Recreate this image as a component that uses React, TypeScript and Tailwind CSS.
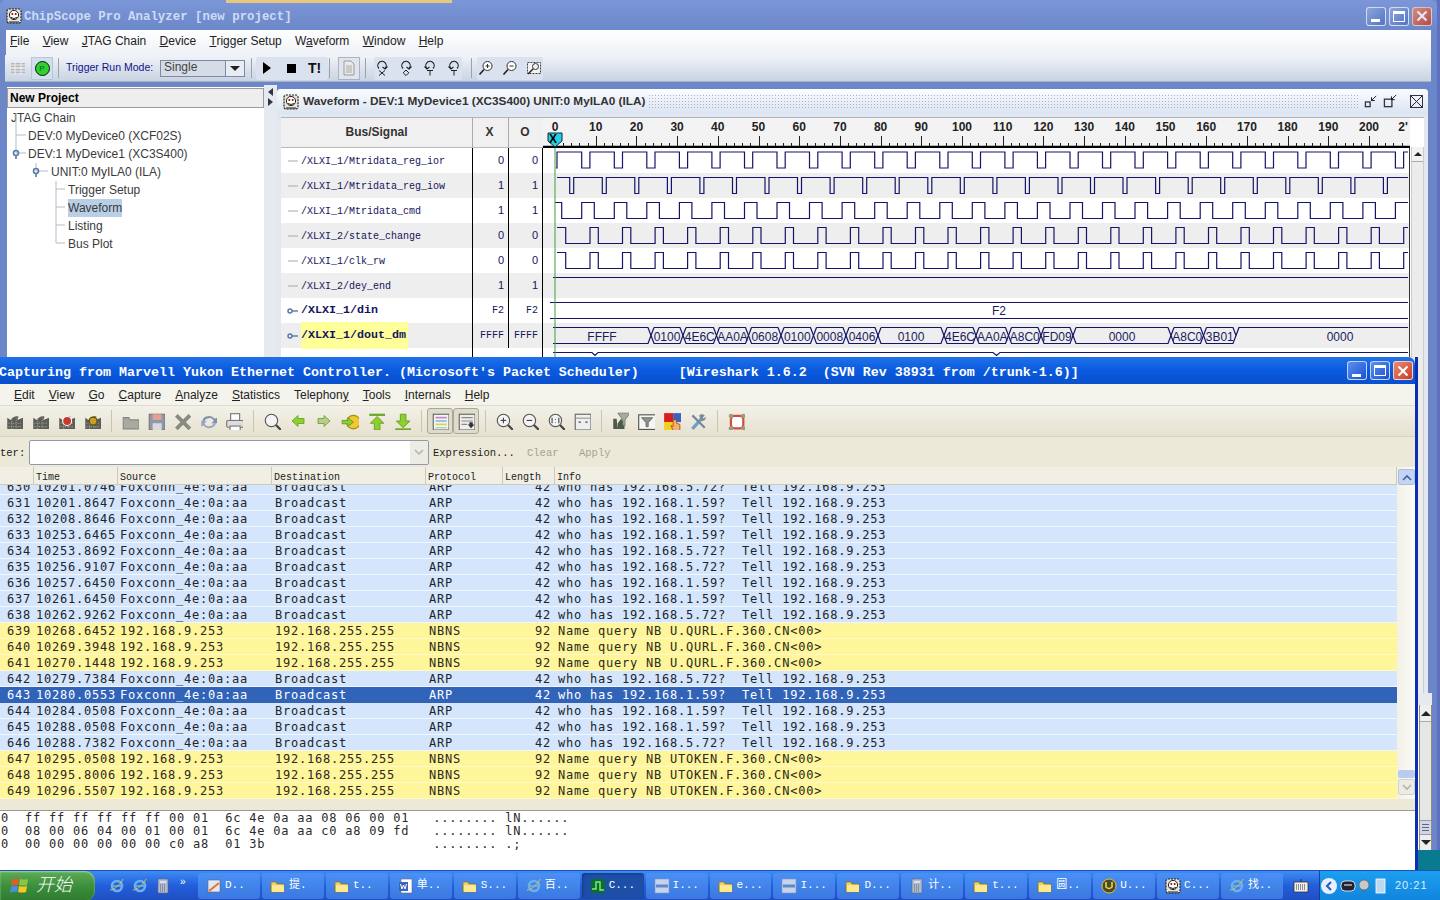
import type { ReactNode } from 'react';

const mono = "font-['Liberation_Mono',monospace]";
const pkt = "font-['DejaVu_Sans_Mono',monospace] text-[12px] tracking-[0.78px]";

const I = ({ s = 16, children }: { s?: number; children: ReactNode }) => (
  <svg width={s} height={s} viewBox="0 0 16 16" fill="none" className="shrink-0">
    {children}
  </svg>
);

const ChipLogo = () => (
  <I>
    <rect x="1" y="1" width="14" height="14" rx="2" fill="#e8e4d8" stroke="#222" strokeWidth="1.2" strokeDasharray="2 1" />
    <circle cx="8" cy="7" r="4.6" fill="#fff" stroke="#222" />
    <circle cx="6.3" cy="6" r="1" fill="#900" />
    <circle cx="9.7" cy="6" r="1" fill="#900" />
    <path d="M5 9.5q3 2 6 0" stroke="#222" />
    <path d="M3 14h10" stroke="#222" />
  </I>
);

// chipscope toolbar trigger icons: loop arrow with a small sign below
const Trig = ({ flip, sign }: { flip?: boolean; sign: string }) => (
  <I>
    <path d="M5 8.5A4.2 4.2 0 1 1 11 8.5" stroke="#222" strokeWidth="1.2" />
    <path d={flip ? 'M2.5 6.5L5 9l2.5-2' : 'M8.5 7l2.5 2 2.5-2.5'} stroke="#222" strokeWidth="1.1" />
    {sign === 'x' && <path d="M5 10.5l6 5M11 10.5l-6 5" stroke="#222" />}
    {sign === 'd' && <path d="M8 10l2.8 2.8L8 15.6l-2.8-2.8z" stroke="#222" />}
    {sign === 't' && <path d="M5 10.5h6M8 10.5V15.5" stroke="#222" />}
  </I>
);

const Lens = ({ sign }: { sign?: string }) => (
  <I>
    <circle cx="9.5" cy="6" r="4.5" stroke="#333" fill="#fff" />
    <path d="M6 9.5L1.5 14.5" stroke="#222" strokeWidth="1.6" />
    {sign && <path d="M7.5 6h4" stroke="#333" />}
    {sign === '+' && <path d="M9.5 4v4" stroke="#333" />}
  </I>
);

const ChipScopeToolbar = () => (
  <div className="h-[27px] flex items-center bg-linear-to-b from-[#f1f4f9] to-[#c9d3e2] border-b border-[#a8b2c4] pl-[5px]">
    <div className="w-[16px]">
      <I>
        <path d="M1 3h14v4H1zM1 9h14v4H1z" fill="#b7b7b7" />
        <path d="M5 1v14M11 1v14M1 5h14M1 11h14" stroke="#eee" />
      </I>
    </div>
    <div className="ml-[5px] w-[22px] h-[23px] flex items-center justify-center bg-[#cfe0ec] border border-[#b8c6d6]">
      <div className="w-[15px] h-[15px] rounded-full bg-[#2fd12f] border border-[#111] text-[8px] leading-[13px] text-center text-[#063]">P</div>
    </div>
    <div className="ml-[5px] w-px h-[20px] bg-[#9aa3ad]" />
    <span className="ml-[7px] w-[92px] text-[10.5px] text-[#12128a] whitespace-nowrap">Trigger Run Mode:</span>
    <div className="ml-[2px] w-[85px] h-[17px] flex border border-[#7d8ba0] bg-[#d5dce8]">
      <span className="flex-1 pl-[3px] text-[12px] leading-[13px] text-[#444]">Single</span>
      <div className="w-[19px] border-l border-[#7d8ba0] bg-[#e8edf3] flex items-center justify-center">
        <div className="w-0 h-0 border-x-[5px] border-x-transparent border-t-[5px] border-t-[#222]" />
      </div>
    </div>
    <div className="ml-[6px] w-px h-[20px] bg-[#9aa3ad]" />
    <div className="w-[72px] h-[23px] flex items-center bg-[#d9e2ee] rounded-[2px] ml-[4px] pl-[7px]">
      <div className="w-0 h-0 border-y-[6px] border-y-transparent border-l-[8px] border-l-black" />
      <div className="ml-[16px] w-[9px] h-[9px] bg-black" />
      <span className="ml-[12px] text-[14px] font-bold text-[#111]">T!</span>
    </div>
    <div className="ml-[1px] w-px h-[20px] bg-[#9aa3ad]" />
    <div className="ml-[8px] w-[22px] h-[23px] border border-[#aab3c0] bg-[#dfe5ee] flex items-center justify-center">
      <I>
        <path d="M3 1h7l3 3v11H3z" fill="#e9e9e9" stroke="#999" />
        <path d="M5 6h6M5 8h6M5 10h6M5 12h6" stroke="#aaa" />
      </I>
    </div>
    <div className="ml-[5px] w-px h-[20px] bg-[#9aa3ad]" />
    <div className="ml-[8px] h-[23px] flex items-center bg-[#d9e2ee] gap-[8px] rounded-[2px]">
      <Trig sign="x" />
      <Trig sign="d" />
      <Trig flip sign="t" />
      <Trig flip sign="t" />
    </div>
    <div className="ml-[9px] w-px h-[20px] bg-[#9aa3ad]" />
    <div className="ml-[5px] h-[23px] flex items-center bg-[#d9e2ee] gap-[8px] px-[1px] rounded-[2px]">
      <Lens sign="+" />
      <Lens sign="-" />
      <I>
        <rect x="1.5" y="2.5" width="13" height="11" fill="#f2f2f2" stroke="#444" strokeDasharray="2 1" />
        <circle cx="9.5" cy="6.5" r="3" stroke="#333" />
        <path d="M7 9l-5 5" stroke="#222" strokeWidth="1.4" />
      </I>
    </div>
  </div>
);

const TreeLines = () => (
  <svg width="80" height="140" viewBox="0 0 80 140" className="absolute -left-[7px] top-[20px]">
    <path d="M16 6V46M16 28H26M16 46H26M36 56V64M36 64H48M56 74V136M56 82H65M56 100H65M56 118H65M56 136H65" stroke="#b3bcc9" fill="none" />
    <circle cx="16" cy="46" r="2.5" fill="none" stroke="#5a79a8" strokeWidth="1.6" />
    <path d="M16 48V52" stroke="#5a79a8" strokeWidth="1.6" />
    <circle cx="36" cy="64" r="2.5" fill="none" stroke="#5a79a8" strokeWidth="1.6" />
    <path d="M36 66V70" stroke="#5a79a8" strokeWidth="1.6" />
  </svg>
);

const treeRows = [
  { t: 'JTAG Chain', pl: 'pl-[4px]' },
  { t: 'DEV:0 MyDevice0 (XCF02S)', pl: 'pl-[21px]' },
  { t: 'DEV:1 MyDevice1 (XC3S400)', pl: 'pl-[21px]' },
  { t: 'UNIT:0 MyILA0 (ILA)', pl: 'pl-[44px]' },
  { t: 'Trigger Setup', pl: 'pl-[61px]' },
  { t: 'Waveform', pl: 'pl-[61px]', sel: true },
  { t: 'Listing', pl: 'pl-[61px]' },
  { t: 'Bus Plot', pl: 'pl-[61px]' },
];

const ProjectPanel = () => (
  <div className="relative w-[257px] mt-[5px] ml-[7px] bg-white self-stretch">
    <div className="mt-[1px] h-[20px] bg-[#eeeeee] border border-[#9b9b9b] pl-[2px] text-[12px] font-bold leading-[18px] text-black">New Project</div>
    <div className="pt-[1px]">
      {treeRows.map(r => (
        <div key={r.t} className={`h-[18px] leading-[18px] text-[12px] text-[#3a3a3a] ${r.pl}`}>
          <span className={r.sel ? 'inline-block bg-[#b8cfe6] h-[18px]' : ''}>{r.t}</span>
        </div>
      ))}
    </div>
    <TreeLines />
  </div>
);

const signals = [
  { n: '/XLXI_1/Mtridata_reg_ior', x: '0', o: '0' },
  { n: '/XLXI_1/Mtridata_reg_iow', x: '1', o: '1' },
  { n: '/XLXI_1/Mtridata_cmd', x: '1', o: '1' },
  { n: '/XLXI_2/state_change', x: '0', o: '0' },
  { n: '/XLXI_1/clk_rw', x: '0', o: '0' },
  { n: '/XLXI_2/dey_end', x: '1', o: '1' },
  { n: '/XLXI_1/din', x: 'F2', o: 'F2', bus: true },
  { n: '/XLXI_1/dout_dm', x: 'FFFF', o: 'FFFF', bus: true, hl: true },
];

const P = 32.55;
const END = 1408;

// square wave: first edge, width of the short part, levels
function wave(start: number, first: number, width: number, top: number, bottom: number, startHigh: boolean, lead: number) {
  let d = `M${lead} ${startHigh ? top : bottom}`;
  let lvl = startHigh;
  const put = (x: number) => {
    if (x >= END) return false;
    d += `H${x.toFixed(1)}V${lvl ? bottom : top}`;
    lvl = !lvl;
    return true;
  };
  if (start > lead) put(start);
  for (let k = 0; k < 30; k++) {
    const a = first + k * P;
    if (!put(a) || !put(a + width)) break;
  }
  return d + `H${END}`;
}

const busEdges = [553, 651, 683, 716.5, 748.5, 781, 813.5, 846, 878, 944, 976, 1008.5, 1041, 1073, 1171, 1203.5, 1236, 1408];
const busVals = ['FFFF', '0100', '4E6C', 'AA0A', '0608', '0100', '0008', '0406', '0100', '4E6C', 'AA0A', 'A8C0', 'FD09', '0000', 'A8C0', '3B01', '0000'];

const Waves = () => (
  <svg width="866" height="210" viewBox="543 148 866 210" className="block">
    <rect x="543" y="148" width="866" height="210" fill="#fff" />
    {[173, 223, 273, 323].map(y => (
      <rect key={y} x="543" y={y} width="866" height="25" fill="#eeeeee" />
    ))}
    <g stroke="#14146c" strokeWidth="1.2" fill="none">
      <path d={wave(557, 581.7, 8.2, 152, 168, false, 556)} />
      <path d={wave(0, 569.7, 4, 177.5, 193.5, true, 557)} />
      <path d={wave(0, 561.7, 20, 202.5, 218.5, true, 555)} />
      <path d={wave(0, 565.7, 24.3, 227.5, 243.5, true, 557)} />
      <path d={wave(0, 565.7, 24.3, 252.5, 268.5, true, 557)} />
      <path d="M553 277.5H1408" />
      <path d="M550 302.5H1408M550 318.5H1408" />
      {busVals.map((_, i) => {
        const a = busEdges[i];
        const b = busEdges[i + 1];
        const l = i === 0 ? a : a + 3;
        const r = i === busVals.length - 1 ? b : b - 3;
        return (
          <path
            key={i}
            d={`M${l} 327.5H${r}${i === busVals.length - 1 ? '' : `L${b} 335.5L${r} 343.5`}H${l}${i === 0 ? '' : `L${a} 335.5L${l} 327.5`}`}
          />
        );
      })}
      <path d="M553 352.5H592l3 3 3-3H993l3.5 3 3.5-3H1408" />
    </g>
    <g fontFamily="Liberation Sans" fontSize="12" fill="#1c1c5c" textAnchor="middle">
      <text x="999" y="315">F2</text>
      {busVals.map((v, i) => (
        <text key={i} x={i === busVals.length - 1 ? 1340 : (busEdges[i] + busEdges[i + 1]) / 2} y="341">{v}</text>
      ))}
    </g>
    <path d="M555 148V358" stroke="#3aa03a" />
  </svg>
);

const rulerLabels = Array.from({ length: 21 }, (_, i) => i * 10);

const Ruler = () => (
  <svg width="867" height="30" viewBox="543 118 867 30" className="block bg-[#f3f3f3]">
    <g stroke="#222">
      {Array.from({ length: 106 }, (_, i) => {
        const x = Math.round(555 + i * 8.14) + 0.5;
        return x < 1409 ? <path key={i} d={`M${x} ${i % 5 === 0 ? 136 : 143}V147`} /> : null;
      })}
    </g>
    <path d="M543 147H1410" stroke="#000" strokeWidth="2.4" />
    <g fontFamily="Liberation Sans" fontSize="12" fontWeight="700" fill="#222" textAnchor="middle">
      {rulerLabels.map(v => (
        <text key={v} x={555 + v * 4.07} y="131">{v}</text>
      ))}
      <text x="1403" y="131">2'</text>
    </g>
    <path d="M548 133H562V141L555 147L548 141Z" fill="#27d0e0" stroke="#124" />
    <text x="553" y="143" fontFamily="Liberation Sans" fontSize="12" fontWeight="700" textAnchor="middle" fill="#000">X</text>
  </svg>
);

const SignalTable = () => (
  <div className="w-[262px] shrink-0 bg-white">
    <div className="h-[30px] flex bg-[#f0f0f0] text-[12px] font-bold text-[#333] text-center leading-[28px] border-b border-[#bbb]">
      <div className="w-[192px] border-r border-[#aaa]">Bus/Signal</div>
      <div className="w-[36px] pr-[2px] border-r border-[#aaa]">X</div>
      <div className="w-[34px] pr-[2px]">O</div>
    </div>
    {signals.map((s, i) => (
      <div key={s.n} className={`h-[25px] flex ${i % 2 ? 'bg-[#eeeeee]' : 'bg-white'} text-[#14145c] ${mono}`}>
        <div className="w-[192px] flex items-center pl-[6px] border-r border-black">
          <svg width="14" height="12" viewBox="0 0 14 12" className="shrink-0">
            {s.bus ? (
              <>
                <circle cx="3" cy="6" r="2" fill="none" stroke="#5a79a8" strokeWidth="1.5" />
                <path d="M5 6H11" stroke="#5a79a8" strokeWidth="1.4" />
              </>
            ) : (
              <path d="M1 6H11" stroke="#aaa" />
            )}
          </svg>
          {s.bus ? (
            <span className={`text-[11.67px] font-bold leading-[27px] ${s.hl ? 'bg-[#ffff99] w-[107px]' : ''}`}>{s.n}</span>
          ) : (
            <span className="text-[10px] pt-[2px]">{s.n}</span>
          )}
        </div>
        <div className={`w-[36px] pr-[4px] text-right leading-[25px] border-r border-black ${s.bus ? 'text-[10px]' : "text-[11px] font-['Liberation_Sans',sans-serif]"}`}>{s.x}</div>
        <div className={`w-[34px] pr-[4px] text-right leading-[25px] border-r border-black ${s.bus ? 'text-[10px]' : "text-[11px] font-['Liberation_Sans',sans-serif]"}`}>{s.o}</div>
      </div>
    ))}
    <div className="h-[10px] ml-[191px] w-[71px] border-x border-black" />
  </div>
);

const WinBtn = ({ kind, red, dim }: { kind: 'min' | 'max' | 'close'; red?: boolean; dim?: boolean }) => (
  <div
    className={`w-[20px] h-[19px] rounded-[3px] border border-white/70 flex items-center justify-center ${
      red ? 'bg-linear-to-br from-[#e88a70] to-[#c83a20]' : dim ? 'bg-linear-to-br from-[#8fa6dc] to-[#5272c6]' : 'bg-linear-to-br from-[#5a90f0] to-[#1c50d0]'
    } ${dim && red ? 'opacity-80' : ''}`}
  >
    {kind === 'min' && <div className="w-[9px] h-[3px] bg-white mt-[9px] -ml-[2px]" />}
    {kind === 'max' && <div className="w-[12px] h-[11px] border border-t-[3px] border-white" />}
    {kind === 'close' && (
      <svg width="12" height="12" viewBox="0 0 12 12">
        <path d="M1.5 1.5l9 9M10.5 1.5l-9 9" stroke="#fff" strokeWidth="2.2" />
      </svg>
    )}
  </div>
);

const WaveformWindow = () => (
  <div className="w-[1151px] h-[604px] rounded-t-[4px] bg-[#e3e8f0] flex flex-col px-[4px]">
    <div className="h-[25px] flex items-center -mx-[4px] pl-[6px] pr-[3px] rounded-t-[4px] bg-linear-to-b from-[#fbfcfe] to-[#dbe4f2]">
      <ChipLogo />
      <span className="ml-[4px] w-[345px] text-[11.8px] font-bold text-[#333] whitespace-nowrap">Waveform - DEV:1 MyDevice1 (XC3S400) UNIT:0 MyILA0 (ILA)</span>
      <div className="w-[710px] h-[16px] bg-[radial-gradient(#aab3c2_1px,transparent_1px)] bg-[length:3px_3px]" />
      <div className="ml-[6px] flex items-center gap-[4px]">
        <I s={15}>
          <rect x="1.5" y="8.5" width="5" height="5" stroke="#334" strokeWidth="1.4" />
          <path d="M13 2L8 7M8 3.5V7H11.5" stroke="#111" />
        </I>
        <I s={15}>
          <rect x="1.5" y="5.5" width="8" height="8" stroke="#334" strokeWidth="1.4" />
          <path d="M14 1L9 6M9 2.5V6H12.5" stroke="#111" />
        </I>
        <div className="ml-[8px] w-[13px] h-[13px] border border-[#334] relative">
          <svg width="11" height="11" viewBox="0 0 11 11">
            <path d="M0 0L11 11M11 0L0 11" stroke="#223" />
          </svg>
        </div>
      </div>
    </div>
    <div className="flex-1 mt-[3px] bg-white border-t border-[#aab4c4] flex min-h-0 items-start">
      <SignalTable />
      <div className="w-[867px] shrink-0">
        <Ruler />
        <div className="border-r-2 border-[#333] w-[867px]">
          <Waves />
        </div>
      </div>
      <div className="w-[14px] self-stretch mt-[29px] ml-[1px] bg-[#ececec] border-x border-[#ccc]">
        <div className="h-[15px] bg-[#f2f2f2] border-b border-[#aaa] flex items-center justify-center">
          <div className="w-0 h-0 border-x-[4px] border-x-transparent border-b-[4px] border-b-[#222]" />
        </div>
      </div>
    </div>
  </div>
);

const LowerPanel = () => (
  <div className="flex-1 w-[1155px] bg-white flex justify-end">
    <div className="w-[13px] bg-[#e6e6e6] flex flex-col border-x border-[#8a8f80]">
      <div className="h-[17px] bg-[#eee] border-b border-[#aaa] flex items-center justify-center">
        <div className="w-0 h-0 border-x-[5px] border-x-transparent border-b-[5px] border-b-[#222]" />
      </div>
      <div className="flex-1" />
      <div className="h-[15px] bg-[#cfd8ea] border-y border-[#99a] flex flex-col justify-center gap-[2px] px-[2px]">
        <div className="h-px bg-[#667]" />
        <div className="h-px bg-[#667]" />
        <div className="h-px bg-[#667]" />
      </div>
      <div className="h-[15px] bg-[#eee] flex items-center justify-center">
        <div className="w-0 h-0 border-x-[5px] border-x-transparent border-t-[5px] border-t-[#222]" />
      </div>
    </div>
  </div>
);

const ChipScopeWindow = () => (
  <div className="absolute left-0 top-0 w-[1440px] h-[850px] bg-[#6b87c8] flex flex-col border-r-[3px] border-[#5f70c0]">
    <div className="h-[30px] flex items-center pt-[2px] pl-[6px] pr-[5px] bg-linear-to-b from-[#7c97d8] to-[#6b88c8] rounded-t-[6px] relative">
      <div className="absolute left-[226px] top-0 w-[226px] h-[3px] bg-[#e8c67e]" />
      <ChipLogo />
      <span className={`ml-[2px] mt-[2px] flex-1 text-[12.4px] font-bold text-[#cddbf6] ${mono}`}>ChipScope Pro Analyzer [new project]</span>
      <div className="flex gap-[3px]">
        <WinBtn kind="min" dim />
        <WinBtn kind="max" dim />
        <WinBtn kind="close" red dim />
      </div>
    </div>
    <div className="mx-[6px]">
      <div className="h-[25px] flex items-center gap-[13.3px] pb-[3px] pl-[4px] text-[12px] text-[#222] bg-linear-to-b from-[#ffffff] to-[#eef1f6]">
        <span><u>F</u>ile</span>
        <span><u>V</u>iew</span>
        <span><u>J</u>TAG Chain</span>
        <span><u>D</u>evice</span>
        <span><u>T</u>rigger Setup</span>
        <span>W<u>a</u>veform</span>
        <span><u>W</u>indow</span>
        <span><u>H</u>elp</span>
      </div>
      <div className="-ml-px">
        <ChipScopeToolbar />
      </div>
    </div>
    <div className="flex-1 flex min-h-0">
      <ProjectPanel />
      <div className="w-[13px] bg-[#e6e9ef] mt-[3px] flex flex-col items-center pt-[3px]">
        <div className="w-0 h-0 border-y-[4px] border-y-transparent border-r-[5px] border-r-[#334]" />
        <div className="w-0 h-0 mt-[2px] border-y-[4px] border-y-transparent border-l-[5px] border-l-[#334]" />
      </div>
      <div className="flex flex-col pt-[7px]">
        <WaveformWindow />
        <div className="h-[12px] w-[1155px] bg-[#e6e9ef]" />
        <LowerPanel />
      </div>
    </div>
  </div>
);

// wireshark toolbar drawings
const Shark = ({ badge }: { badge?: string }) => (
  <I s={18}>
    <path d="M2 15V5l3 2q3-4 7-3l-1 3 5-2v10z" fill="#5d5d58" />
    <path d="M3 13h12M3 10h12M6 6v9M10 5v10" stroke="#9a9a94" strokeDasharray="1 1" />
    {badge === 'stop' && <circle cx="9" cy="8" r="4" fill="#c83a2c" stroke="#fff" />}
    {badge === 'restart' && <circle cx="9" cy="8" r="3.5" fill="#c8a020" stroke="#5d4d10" />}
  </I>
);

const Arrow = ({ dir, color }: { dir: 'l' | 'r' | 'u' | 'd'; color: string }) => {
  const rot = { l: 0, r: 180, u: 90, d: -90 }[dir];
  return (
    <path d="M2 8L8 2.5V5.5H14V10.5H8V13.5Z" fill={color} stroke="#6a9a20" strokeWidth="0.8" transform={`rotate(${rot} 8 8)`} />
  );
};

const Mag = ({ label }: { label?: string }) => (
  <I s={18}>
    <circle cx="7.5" cy="7.5" r="5.5" fill="#f4f4f4" stroke="#555" />
    <path d="M11.5 11.5L16 16" stroke="#444" strokeWidth="2" />
    {(label === '+' || label === '-') && <path d="M5 7.5h5" stroke="#444" />}
    {label === '+' && <path d="M7.5 5v5" stroke="#444" />}
    {label === '1' && <path d="M4.5 5v5M7.5 6.5v.5M7.5 9v.5M10.5 5v5" stroke="#444" />}
  </I>
);

const sharkTools: ReactNode[][] = [
  [<Shark />, <Shark />, <Shark badge="stop" />, <Shark badge="restart" />],
  [
    <I s={18}>
      <path d="M2 5h5l1 2h8v8H2z" fill="#a9a9a0" stroke="#888" />
    </I>,
    <I s={18}>
      <rect x="2" y="2" width="14" height="14" fill="#8c98ac" stroke="#777" />
      <rect x="5" y="2" width="8" height="5" fill="#e6a090" />
      <rect x="5" y="10" width="8" height="6" fill="#dadada" />
    </I>,
    <I s={18}>
      <path d="M3 3l12 12M15 3L3 15" stroke="#8a8a84" strokeWidth="3.4" />
    </I>,
    <I s={18}>
      <path d="M3 8a6 5 0 0 1 11-2l2-1v5h-5l2-2a4 3 0 0 0-8 1z" fill="#7d92ae" />
      <path d="M15 10a6 5 0 0 1-11 2l-2 1V8h5l-2 2a4 3 0 0 0 8-1z" fill="#98a8be" />
    </I>,
    <I s={18}>
      <rect x="5" y="1.5" width="8" height="6" fill="#fff" stroke="#777" />
      <rect x="1.5" y="7.5" width="15" height="6" rx="1" fill="#ddd" stroke="#777" />
      <rect x="4.5" y="12.5" width="9" height="4" fill="#fff" stroke="#777" />
    </I>,
  ],
  [
    <Mag />,
    <I>
      <Arrow dir="l" color="#8cd030" />
    </I>,
    <I>
      <Arrow dir="r" color="#b8cc90" />
    </I>,
    <I s={18}>
      <circle cx="11" cy="9" r="6" fill="#f0c830" stroke="#a88a10" />
      <path d="M11 9L6 5v2.5H1v3h5V13z" fill="#8cd030" stroke="#6a9a20" strokeWidth="0.8" />
    </I>,
    <I s={18}>
      <path d="M2 2.5h14" stroke="#6aa828" strokeWidth="2" />
      <path d="M9 4l6 6h-3.5v6h-5v-6H3z" fill="#8cd030" stroke="#6a9a20" strokeWidth="0.8" />
    </I>,
    <I s={18}>
      <path d="M2 15.5h14" stroke="#6aa828" strokeWidth="2" />
      <path d="M9 14l6-6h-3.5V2h-5v6H3z" fill="#8cd030" stroke="#6a9a20" strokeWidth="0.8" />
    </I>,
  ],
];

const ToolSep = () => <div className="w-px h-[22px] bg-[#c9c5b2] ml-[6px] mr-[5px] shrink-0" />;
const Tool = ({ children }: { children: ReactNode }) => <div className="w-[26px] h-[26px] flex items-center justify-center shrink-0">{children}</div>;

const viewTools: ReactNode[] = [
  <Mag label="+" />,
  <Mag label="-" />,
  <Mag label="1" />,
  <I s={18}>
    <rect x="2" y="2" width="14" height="14" fill="#efefef" stroke="#666" />
    <path d="M2 5.5h14" stroke="#999" />
    <path d="M5 9h2M11 9h2" stroke="#444" />
  </I>,
];

const filterTools: ReactNode[] = [
  <I s={18}>
    <path d="M2 6h3l1 9H2zM6 10l3-4 3 4v5H6z" fill="#4d5a4a" />
    <path d="M6 1h11l-4.5 6v5h-2V7z" fill="#9fb09a" stroke="#666" strokeWidth="0.6" />
  </I>,
  <I s={18}>
    <rect x="1.5" y="2.5" width="15" height="13" fill="#f5f5f5" stroke="#555" />
    <path d="M4 5h10l-4 4.5V13H8V9.5z" fill="#8a948a" stroke="#555" strokeWidth="0.6" />
  </I>,
  <I s={18}>
    <rect x="1" y="1" width="8" height="8" fill="#d42020" />
    <rect x="9" y="1" width="7" height="8" fill="#3a60c0" />
    <rect x="1" y="9" width="8" height="7" fill="#f0d020" />
    <path d="M9 7v6l-2-1 2 4.5h6V11l-3-1V7z" fill="#f5b070" stroke="#a65a10" strokeWidth="0.8" />
  </I>,
  <I s={18}>
    <path d="M3 15L12 5" stroke="#6fa0c8" strokeWidth="3" />
    <path d="M9 3a3.5 3.5 0 0 1 5 0l-2 2 1 1 2-2a3.5 3.5 0 0 1-4 4z" fill="#7a8a9a" />
    <path d="M3 3l11 11" stroke="#7a8a9a" strokeWidth="2" />
  </I>,
];

const WiresharkToolbar = () => (
  <div className="h-[31px] flex items-center pb-[1px] bg-linear-to-b from-[#f3f1e8] to-[#e6e2d0] border-b border-[#d8d4c0] pl-[1px]">
    {sharkTools[0].map((t, i) => (
      <Tool key={i}>{t}</Tool>
    ))}
    <ToolSep />
    {sharkTools[1].map((t, i) => (
      <Tool key={i}>{t}</Tool>
    ))}
    <ToolSep />
    {sharkTools[2].map((t, i) => (
      <Tool key={i}>{t}</Tool>
    ))}
    <ToolSep />
    <div className="w-[26px] h-[26px] rounded-[3px] border border-[#aaa89a] bg-[#e0dccb] flex items-center justify-center shrink-0">
      <I s={18}>
        <rect x="2" y="2" width="14" height="14" fill="#f4f4f4" stroke="#666" />
        <path d="M4 5h10" stroke="#d080c8" strokeWidth="1.5" />
        <path d="M4 8h10" stroke="#80c0e0" strokeWidth="1.5" />
        <path d="M4 11h10" stroke="#d8d050" strokeWidth="1.5" />
        <path d="M4 14h10" stroke="#90d090" strokeWidth="1" />
      </I>
    </div>
    <div className="w-[26px] h-[26px] rounded-[3px] border border-[#aaa89a] bg-[#e0dccb] flex items-center justify-center shrink-0">
      <I s={18}>
        <rect x="2" y="2" width="14" height="14" fill="#eee" stroke="#666" />
        <path d="M4 5h10M4 8h10M4 11h5" stroke="#888" />
        <path d="M11 9h3v2h1.5l-3 3.5-3-3.5H11z" fill="#333" />
      </I>
    </div>
    <ToolSep />
    {viewTools.map((t, i) => (
      <Tool key={i}>{t}</Tool>
    ))}
    <ToolSep />
    {filterTools.map((t, i) => (
      <Tool key={i}>{t}</Tool>
    ))}
    <ToolSep />
    <Tool>
      <I s={18}>
        <rect x="3.5" y="3.5" width="11" height="11" rx="3" fill="#fff" stroke="#d05040" strokeWidth="2" />
        <circle cx="3.5" cy="3.5" r="2" fill="#a09a7c" />
        <circle cx="14.5" cy="3.5" r="2" fill="#a09a7c" />
        <circle cx="3.5" cy="14.5" r="2" fill="#a09a7c" />
        <circle cx="14.5" cy="14.5" r="2" fill="#a09a7c" />
      </I>
    </Tool>
  </div>
);

type Pk = [number, string, number];
const SEL = 643;
// third field: 1 / 5 are the asked-for subnets of ARP rows, 11 / 20 the NBNS names
const packets: Pk[] = [
  [630, '10201.0746', 5], [631, '10201.8647', 1], [632, '10208.8646', 1], [633, '10253.6465', 1],
  [634, '10253.8692', 5], [635, '10256.9107', 5], [636, '10257.6450', 1], [637, '10261.6450', 1],
  [638, '10262.9262', 5], [639, '10268.6452', 11], [640, '10269.3948', 11], [641, '10270.1448', 11],
  [642, '10279.7384', 5], [643, '10280.0553', 1], [644, '10284.0508', 1], [645, '10288.0508', 1],
  [646, '10288.7382', 5], [647, '10295.0508', 20], [648, '10295.8006', 20], [649, '10296.5507', 20],
];

const PacketRow = ({ p }: { p: Pk }) => {
  const [no, time, kind] = p;
  const nbns = kind >= 11;
  const sel = no === SEL;
  const info = nbns
    ? `Name query NB ${kind === 11 ? 'U.QURL.F.360.CN' : 'UTOKEN.F.360.CN'}<00>`
    : `who has 192.168.${kind === 1 ? '1.59' : '5.72'}?  Tell 192.168.9.253`;
  const tone = sel
    ? 'bg-[#3163b8] text-white'
    : nbns
      ? 'bg-[#fff59a] text-[#2a2a20] border-b border-[#fffac8]'
      : 'bg-[#d5e6fc] text-[#20252c] border-b border-[#f2f7ff]';
  return (
    <div className={`h-[16px] leading-[16px] flex whitespace-pre ${pkt} ${tone}`}>
      <span className="w-[31px] text-right">{no}</span>
      <span className="ml-[5px] w-[84px]">{time}</span>
      <span className="w-[155px]">{nbns ? '192.168.9.253' : 'Foxconn_4e:0a:aa'}</span>
      <span className="w-[154px]">{nbns ? '192.168.255.255' : 'Broadcast'}</span>
      <span className="w-[72px]">{nbns ? 'NBNS' : 'ARP'}</span>
      <span className="w-[50px] text-right">{nbns ? '92' : '42'}</span>
      <span className="ml-[7px]">{info}</span>
    </div>
  );
};

const cols = [
  { t: '', w: 'w-[34px]' },
  { t: 'Time', w: 'w-[84px]' },
  { t: 'Source', w: 'w-[154px]' },
  { t: 'Destination', w: 'w-[154px]' },
  { t: 'Protocol', w: 'w-[77px]' },
  { t: 'Length', w: 'w-[52px]' },
  { t: 'Info', w: 'flex-1' },
];

const hexLines = [
  '0  ff ff ff ff ff ff 00 01  6c 4e 0a aa 08 06 00 01   ........ lN......',
  '0  08 00 06 04 00 01 00 01  6c 4e 0a aa c0 a8 09 fd   ........ lN......',
  '0  00 00 00 00 00 00 c0 a8  01 3b                     ........ .;',
];

const WiresharkWindow = () => (
  <div className="absolute left-0 top-[357px] w-[1418px] h-[513px] flex flex-col bg-[#ece9d8] border-r-[3px] border-[#0a2fb0]">
    <div className="h-[27px] flex items-center pr-[2px] bg-linear-to-b from-[#1f72e8] via-[#0a5ae0] to-[#0a50cc] rounded-tr-[7px]">
      <span className={`flex-1 -ml-px pt-[5px] whitespace-pre text-[13.33px] font-bold text-white ${mono}`}>
        {"Capturing from Marvell Yukon Ethernet Controller. (Microsoft's Packet Scheduler)     [Wireshark 1.6.2  (SVN Rev 38931 from /trunk-1.6)]"}
      </span>
      <div className="flex gap-[3px]">
        <WinBtn kind="min" />
        <WinBtn kind="max" />
        <WinBtn kind="close" red />
      </div>
    </div>
    <div className="h-[22px] flex items-center gap-[14px] pl-[14px] bg-[#f4f3ec] text-[12px] text-[#222] border-b border-[#e0dccb]">
      <span><u>E</u>dit</span>
      <span><u>V</u>iew</span>
      <span><u>G</u>o</span>
      <span><u>C</u>apture</span>
      <span><u>A</u>nalyze</span>
      <span><u>S</u>tatistics</span>
      <span>Telephon<u>y</u></span>
      <span><u>T</u>ools</span>
      <span><u>I</u>nternals</span>
      <span><u>H</u>elp</span>
    </div>
    <WiresharkToolbar />
    <div className={`h-[30px] flex items-center bg-[#ece9d8] text-[10.5px] ${mono}`}>
      <span className="w-[29px] mt-[4px] text-[#222]">ter:</span>
      <div className="w-[400px] h-[25px] bg-white border border-[#8e99ab] rounded-[2px] flex justify-end">
        <div className="w-[18px] bg-[#ecebe4] flex items-center justify-center">
          <svg width="10" height="8" viewBox="0 0 10 8">
            <path d="M1 2l4 4 4-4" stroke="#b5b5ad" strokeWidth="1.5" fill="none" />
          </svg>
        </div>
      </div>
      <span className="ml-[4px] mt-[4px] w-[94px] text-[#222]">Expression...</span>
      <span className="w-[52px] mt-[4px] text-[#a5a396]">Clear</span>
      <span className="mt-[4px] text-[#a5a396]">Apply</span>
    </div>
    <div className="flex-1 min-h-0 flex">
      <div className="w-[1397px] flex flex-col shrink-0">
        <div className={`h-[18px] flex bg-[#f1efe3] text-[10px] leading-[22px] text-[#222] border-b border-[#cfcbb8] ${mono}`}>
          {cols.map(c => (
            <div key={c.t} className={`${c.w} h-[17px] pl-[2px] border-r border-[#cdc9b5] whitespace-nowrap overflow-hidden`}>{c.t}</div>
          ))}
        </div>
        <div className="h-[314px] overflow-hidden">
          <div className="-mt-[6px]">
            {packets.map(p => (
              <PacketRow key={p[0]} p={p} />
            ))}
          </div>
        </div>
      </div>
      <div className="w-[18px] h-[332px] pl-[1px] bg-linear-to-r from-[#f3f1e6] to-[#fbfbf8] flex flex-col">
        <div className="h-[16px] mt-[2px] bg-[#c4d5f4] border border-[#aabde4] rounded-[2px] flex items-center justify-center">
          <svg width="10" height="7" viewBox="0 0 10 7">
            <path d="M1 6l4-4 4 4" stroke="#44619c" strokeWidth="1.6" fill="none" />
          </svg>
        </div>
        <div className="flex-1" />
        <div className="h-[8px] bg-[#b9cbee] rounded-[2px]" />
        <div className="h-[16px] mt-[1px] mb-[4px] bg-[#ecebe4] border border-[#d5d3c7] rounded-[2px] flex items-center justify-center">
          <svg width="10" height="7" viewBox="0 0 10 7">
            <path d="M1 1l4 4 4-4" stroke="#b5b5ad" strokeWidth="1.6" fill="none" />
          </svg>
        </div>
      </div>
    </div>
    <div className={`h-[60px] bg-white border-t border-[#9a9a8f] pl-px pt-[1px] whitespace-pre text-[#2a2a2a] ${pkt}`}>
      {hexLines.map(l => (
        <div key={l} className="h-[13px] leading-[13px]">{l}</div>
      ))}
    </div>
  </div>
);

const Folder = () => (
  <I>
    <path d="M1 4h5l1 2h7v8H1z" fill="#f2d060" stroke="#8a7020" strokeWidth="0.7" />
    <path d="M2 7h12v7H2z" fill="#fbe88f" />
  </I>
);
const IeIcon = () => (
  <I>
    <circle cx="8" cy="8" r="5" fill="none" stroke="#6ab0f0" strokeWidth="2.6" />
    <path d="M4 8h8" stroke="#6ab0f0" strokeWidth="1.6" />
    <path d="M1 12C5 12 12 6 14 1" stroke="#e8c030" strokeWidth="1" />
  </I>
);
const Calc = () => (
  <I>
    <rect x="3" y="1" width="10" height="14" rx="1" fill="#aebbd0" stroke="#667" strokeWidth="0.6" />
    <rect x="5" y="3" width="6" height="2" fill="#dde" />
    <path d="M5 7h6M5 9h6M5 11h6M5 13h6" stroke="#667" strokeDasharray="1 1" />
  </I>
);
const Ise = () => (
  <I>
    <rect x="1" y="1" width="14" height="14" fill="#c7d3ea" stroke="#7f95c0" strokeWidth="0.6" />
    <path d="M2 8h12" stroke="#5f88c8" strokeWidth="3" />
  </I>
);
const WordI = () => (
  <I>
    <rect x="3" y="1" width="11" height="14" fill="#fff" stroke="#667" strokeWidth="0.6" />
    <rect x="1" y="4" width="9" height="9" fill="#3a66c0" />
    <path d="M2.5 6l1.5 5 1.5-4 1.5 4 1.5-5" stroke="#fff" fill="none" />
  </I>
);
const Dee = () => (
  <I>
    <rect x="2" y="2" width="12" height="12" fill="#dfe8f6" stroke="#667" strokeWidth="0.6" />
    <path d="M3 13L13 5" stroke="#e8762c" strokeWidth="2.2" />
  </I>
);
const WaveI = () => (
  <I>
    <rect x="1" y="1" width="14" height="14" rx="2" fill="#0b6e2d" />
    <path d="M2 11h4V4h4v8h4" stroke="#7df07d" fill="none" strokeWidth="1.4" />
  </I>
);
const Uedit = () => (
  <I>
    <circle cx="8" cy="8" r="7" fill="#4a4a2a" stroke="#e8c030" />
    <path d="M5 4v5q3 3 6 0V4" stroke="#f0d040" strokeWidth="1.6" fill="none" />
  </I>
);

const taskItems: { t: string; i: ReactNode; on?: boolean }[] = [
  { t: 'D..', i: <Dee /> },
  { t: '提.', i: <Folder /> },
  { t: 't..', i: <Folder /> },
  { t: '单..', i: <WordI /> },
  { t: 'S...', i: <Folder /> },
  { t: '百..', i: <IeIcon /> },
  { t: 'C...', i: <WaveI />, on: true },
  { t: 'I...', i: <Ise /> },
  { t: 'e...', i: <Folder /> },
  { t: 'I...', i: <Ise /> },
  { t: 'D...', i: <Folder /> },
  { t: '计..', i: <Calc /> },
  { t: 't...', i: <Folder /> },
  { t: '圆..', i: <Folder /> },
  { t: 'U...', i: <Uedit /> },
  { t: 'C...', i: <ChipLogo /> },
  { t: '找..', i: <IeIcon /> },
];

const Taskbar = () => (
  <div className="h-[30px] flex items-center bg-linear-to-b from-[#3f8cf3] via-[#245edb] to-[#1f4fc2] border-t border-[#1c50c0]">
    <div className="w-[95px] h-[30px] flex items-center pl-[10px] rounded-r-[10px] bg-linear-to-b from-[#5eac56] via-[#3c8f3c] to-[#2f7a30] shadow-[inset_0_1px_2px_#9fd79a]">
      <svg width="20" height="20" viewBox="0 0 20 20" className="shrink-0">
        <path d="M2 4q3-2 7-1l-1 6q-4-1-7 1z" fill="#e8582c" />
        <path d="M10 3q4 1 8 0l-1 6q-4 1-8 0z" fill="#8cc63e" />
        <path d="M1 11q3-2 7-1l-1 6q-4-1-7 1z" fill="#4a8ee0" />
        <path d="M9 10q4 1 8 0l-1 6q-4 1-8 0z" fill="#f5c828" />
      </svg>
      <span className="ml-[6px] -mt-[4px] text-[18px] font-light italic text-white font-['Noto_Sans_CJK_SC',sans-serif]">开始</span>
    </div>
    <div className="w-[104px] flex items-center pl-[14px] gap-[7px] shrink-0">
      <IeIcon />
      <IeIcon />
      <Calc />
      <span className="text-[10px] text-white -mt-[8px] ml-[2px]">»</span>
    </div>
    <div className="w-[1085px] flex gap-[2px] shrink-0 -ml-px">
      {taskItems.map((b, i) => (
        <div
          key={i}
          className={`flex-1 h-[26px] rounded-[3px] flex items-center pl-[8px] text-white text-[11px] font-['Liberation_Mono','Noto_Sans_CJK_SC',monospace] ${
            b.on ? 'bg-[#1e4fa8] shadow-[inset_1px_1px_3px_#123a80]' : 'bg-linear-to-b from-[#4a90f5] to-[#3a78e0]'
          }`}
        >
          {b.i}
          <span className="ml-[3px] whitespace-nowrap">{b.t}</span>
        </div>
      ))}
    </div>
    <div className="ml-[10px] w-[20px] shrink-0">
      <I>
        <rect x="1" y="4" width="14" height="10" fill="#eee" stroke="#333" strokeWidth="0.8" />
        <path d="M3 7h10M3 9h10M3 11h10" stroke="#333" strokeDasharray="1 1" />
        <path d="M8 1v3" stroke="#333" />
      </I>
    </div>
    <div className="flex-1 h-[30px] ml-[6px] flex items-center bg-linear-to-b from-[#1d9ff0] to-[#0f84dc] border-l border-[#0e3f9a] pl-[1px]">
      <div className="w-[16px] h-[16px] rounded-full bg-[#e8f0ff] flex items-center justify-center text-[#2458c8]">
        <svg width="8" height="10" viewBox="0 0 8 10">
          <path d="M6 1L2 5l4 4" stroke="currentColor" strokeWidth="2" fill="none" />
        </svg>
      </div>
      <div className="ml-[3px]">
        <I>
          <rect x="1" y="3" width="14" height="10" rx="4" fill="#223" stroke="#fff" strokeWidth="0.8" />
          <path d="M4 7h8" stroke="#fff" />
        </I>
      </div>
      <I>
        <circle cx="8" cy="7" r="5" fill="#c8c8c8" stroke="#666" strokeWidth="0.8" />
        <path d="M8 12v3" stroke="#666" />
      </I>
      <I>
        <rect x="4" y="1" width="9" height="14" fill="#bcd7f0" stroke="#fff" strokeWidth="0.8" />
      </I>
      <span className="ml-[7px] text-[11px] tracking-[1px] text-[#dfefff]">20:21</span>
    </div>
  </div>
);

export default function App() {
  return (
    <div className="w-[1440px] h-[900px] flex flex-col overflow-hidden font-['Liberation_Sans',sans-serif]">
      <div className="relative flex-1 bg-[#0a7a90]">
        <ChipScopeWindow />
        <WiresharkWindow />
      </div>
      <Taskbar />
    </div>
  );
}
